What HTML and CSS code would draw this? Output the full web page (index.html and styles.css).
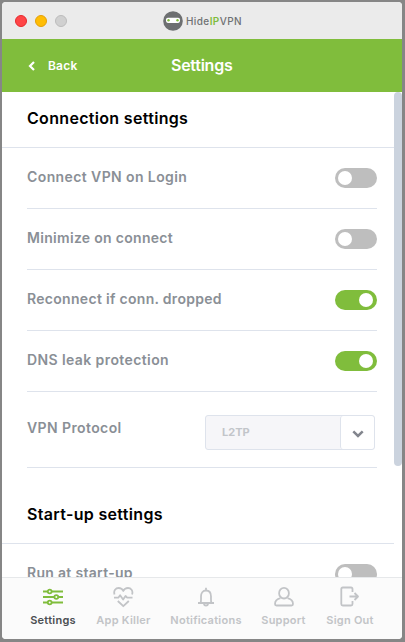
FILE: index.html
```html
<!DOCTYPE html>
<html lang="en">
<head>
<meta charset="utf-8">
<title>HideIPVPN</title>
<link rel="stylesheet" href="styles.css">
</head>
<body>
<div class="window">
  <header class="titlebar">
    <div class="lights"><i class="light red"></i><i class="light amber"></i><i class="light off"></i></div>
    <div class="brand">
      <svg width="20" height="20" viewBox="0 0 20 20"><circle cx="10" cy="10" r="9.8" fill="#6d6f71"/><rect x="3" y="6.700" width="14" height="5.200" rx="1.800" fill="#fff"/><circle cx="5.500" cy="9.200" r="1.200" fill="#80bd3c"/><circle cx="14.500" cy="9.200" r="1.200" fill="#80bd3c"/></svg>
      <span class="brand-name">Hide<b>IP</b>VPN</span>
    </div>
  </header>
  <div class="topbar">
    <div class="back"><svg width="8" height="10" viewBox="0 0 8 10"><path d="M6 1 2 5l4 4" fill="none" stroke="#fff" stroke-width="2.2"/></svg><span class="back-label">Back</span></div>
    <h1 class="title">Settings</h1>
  </div>
  <main class="content">
    <div class="list">
      <h2 class="heading">Connection settings</h2>
      <div class="row"><span class="label wide">Connect VPN on Login</span><span class="toggle"></span></div>
      <div class="row"><span class="label">Minimize on connect</span><span class="toggle"></span></div>
      <div class="row"><span class="label">Reconnect if conn. dropped</span><span class="toggle on"></span></div>
      <div class="row"><span class="label wide">DNS leak protection</span><span class="toggle on"></span></div>
      <div class="row protocol"><span class="label wide">VPN Protocol</span>
        <div class="select"><span class="value">L2TP</span><span class="arrow"><svg width="12" height="8" viewBox="0 0 12 8"><path d="m1.300 1.300 4.700 4.700 4.700-4.700" fill="none" stroke="#83868e" stroke-width="2.500"/></svg></span></div>
      </div>
      <h2 class="heading startup">Start-up settings</h2>
      <div class="row"><span class="label">Run at start-up</span><span class="toggle"></span></div>
    </div>
    <div class="scrollbar"></div>
  </main>
  <nav class="tabs">
    <div class="tab t1 active"><svg width="22" height="22" viewBox="0 0 22 22"><path d="M1 5.500h5M9.500 5.500H21M1 11h11.500M16 11h5M1 16.500h5M9.500 16.500H21"/><circle cx="7.700" cy="5.500" r="1.900"/><circle cx="14.300" cy="11" r="1.900"/><circle cx="7.700" cy="16.500" r="1.900"/></svg><span>Settings</span></div>
    <div class="tab t2"><svg width="22" height="22" viewBox="0 0 22 22"><path d="M1.500 8.500C.3 4.500 2.800 2 5.600 2 7.800 2 9.500 3.200 10.300 5c.8-1.800 2.500-3 4.700-3 2.800 0 5.300 2.500 4.100 6.500M1 11.700h4.300l1.800-2.400 3 4.200L12.500 10l1.700 1.700h5.300M4.800 15l5.500 5.200 5.500-5.200"/></svg><span>App Killer</span></div>
    <div class="tab t3"><svg width="22" height="22" viewBox="0 0 22 22"><path d="M3 17h16M5.500 17c.8-1.500.5-3.500.5-6.500 0-3.500 1.800-6 5-6s5 2.500 5 6c0 3-.3 5 .5 6.500M11 1.700v2.500M9 17.500c0 2.700 4 2.700 4 0"/></svg><span>Notifications</span></div>
    <div class="tab t4"><svg width="22" height="22" viewBox="0 0 22 22"><ellipse cx="11" cy="7.200" rx="4.900" ry="5.300"/><path d="M7.500 12.200C4 13 2 15 2 18c0 1 .5 1.500 1.500 1.500h15c1 0 1.500-.5 1.500-1.500 0-3-2-5-5.500-5.800"/></svg><span>Support</span></div>
    <div class="tab t5"><svg width="22" height="22" viewBox="0 0 22 22"><path d="M13.500 6V3c0-1-.5-1.500-1.500-1.500H3.800C2.800 1.500 2.300 2 2.300 3v15c0 1 .5 1.500 1.500 1.500H12c1 0 1.500-.5 1.500-1.500v-3M10.500 10.500h8M15.500 7l3.500 3.500-3.500 3.500"/></svg><span>Sign Out</span></div>
  </nav>
</div>
</body>
</html>
```
FILE: styles.css
```css
* { box-sizing: border-box; }
body {
  margin: 0;
  height: 642px;
  padding: 2px 3px 3px 2px;
  background: #868686;
  font-family: Inter, "Liberation Sans", sans-serif;
  overflow: hidden;
}
.window {
  display: flex;
  flex-direction: column;
  height: 637px;
  background: #fff;
  border-radius: 4px;
  overflow: hidden;
}
.titlebar {
  flex: none;
  display: grid;
  grid-template-columns: 161px auto;
  align-items: center;
  height: 37px;
  background: #ebebeb;
}
.lights { display: flex; gap: 8px; padding-left: 13px; }
.light { width: 12px; height: 12px; border-radius: 50%; border: 1px solid; }
.red { background: #ff4547; border-color: #e6292d; }
.amber { background: #ffbd05; border-color: #e4a008; }
.off { background: #d0d0d0; border-color: #bcbcbc; }
.brand { display: flex; align-items: center; gap: 3px; }
.brand-name { font: 500 10px/20px Inter, sans-serif; color: #6f7173; letter-spacing: .4px; padding-top: 1px; white-space: nowrap; }
.brand-name b { color: #80bd3c; font-weight: 600; }
.topbar {
  flex: none;
  display: grid;
  grid-template-columns: 169px auto;
  align-items: center;
  height: 53px;
  background: #80bd3c;
  color: #fff;
}
.back { display: flex; align-items: center; gap: 12px; padding-left: 26px; }
.back-label { font-size: 12px; font-weight: 600; letter-spacing: .2px; margin-top: -1px; }
.title { margin: -1px 0 0; font-size: 16px; font-weight: 600; line-height: 20px; letter-spacing: -.25px; }
.content { flex: 1; min-height: 0; display: flex; overflow: hidden; }
.list { width: 392px; flex: none; }
.heading {
  margin: 0;
  height: 56px;
  padding: 16px 0 0 25px;
  border-bottom: 1px solid #dee3ec;
  font-size: 16px;
  font-weight: 600;
  line-height: 20px;
  letter-spacing: .32px;
  color: #000;
}
.startup { height: 76px; padding-top: 36px; }
.row {
  display: flex;
  align-items: center;
  justify-content: space-between;
  height: 61px;
  width: 350px;
  margin-left: 25px;
  border-bottom: 1px solid #dee3ec;
}
.label { font-size: 14px; font-weight: 600; line-height: 20px; letter-spacing: .3px; color: #8a8f96; margin-top: -2px; white-space: nowrap; }
.wide { letter-spacing: .4px; }
.toggle { display: flex; align-items: center; width: 42px; height: 20px; padding: 3px; border-radius: 10px; background: #bebebe; }
.toggle::before { content: ""; width: 14px; height: 14px; border-radius: 50%; background: #fff; }
.toggle.on { background: #80bd3c; justify-content: flex-end; padding-right: 4px; }
.protocol { height: 76px; padding-right: 2px; }
.protocol .label { margin-top: -4px; }
.select { display: flex; width: 170px; height: 35px; margin-top: 5px; border: 1px solid #dee3ec; border-radius: 3px; background: #f6f6f9; overflow: hidden; }
.value { flex: 1; padding-left: 16px; font-size: 11px; font-weight: 700; line-height: 33px; color: #c2c5ca; }
.arrow { display: flex; align-items: center; justify-content: center; width: 34px; padding-top: 3px; background: #fff; border-left: 1px solid #dee3ec; border-radius: 3px; }
.scrollbar { width: 8px; height: 374px; border-radius: 4px; background: #cbd3de; }
.tabs {
  flex: none;
  display: flex;
  gap: 20px;
  height: 62px;
  padding: 8px 0 0 28px;
  border-top: 1px solid #e6e8ea;
  background: #fbfbfb;
  color: #c2c4c7;
}
.tab { display: flex; flex-direction: column; align-items: center; gap: 4px; font-size: 11px; font-weight: 600; line-height: 16px; letter-spacing: .25px; white-space: nowrap; }
.tab svg { fill: none; stroke: currentColor; stroke-width: 1.8; stroke-linejoin: round; }
.active { color: #4b4e52; }
.tab.active svg { stroke: #80bd3c; }
.t1 { width: 46px; }
.t2 { width: 55px; }
.t3 { width: 70px; }
.t4 { width: 45px; }
.t5 { width: 48px; }
```
